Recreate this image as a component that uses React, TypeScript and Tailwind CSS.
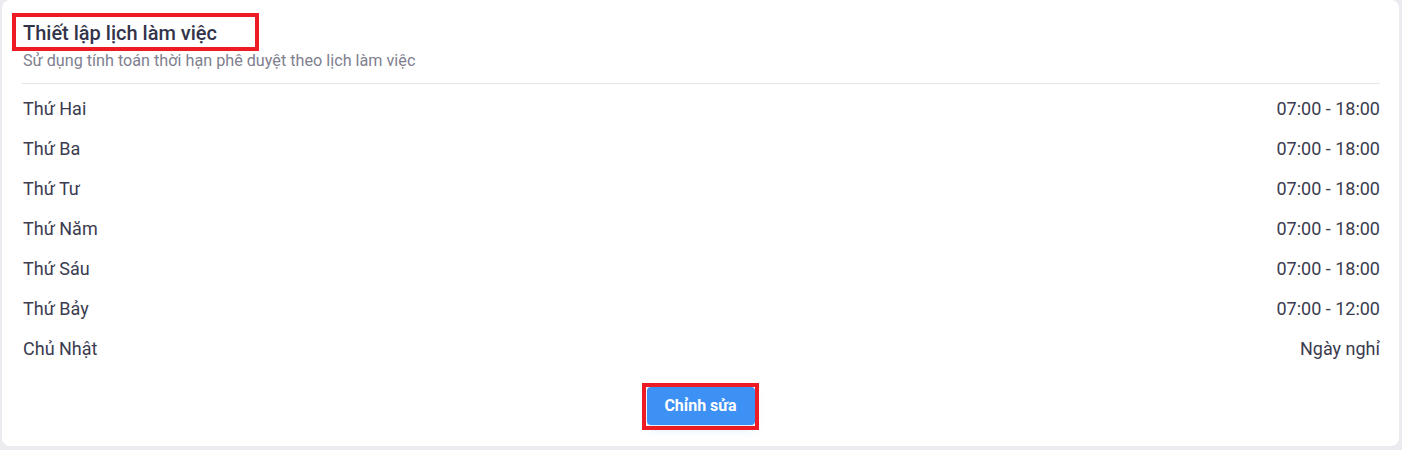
import React from 'react';

interface DaySchedule {
  day: string;
  hours: string;
}

const schedule: DaySchedule[] = [
  { day: 'Thứ Hai', hours: '07:00 - 18:00' },
  { day: 'Thứ Ba', hours: '07:00 - 18:00' },
  { day: 'Thứ Tư', hours: '07:00 - 18:00' },
  { day: 'Thứ Năm', hours: '07:00 - 18:00' },
  { day: 'Thứ Sáu', hours: '07:00 - 18:00' },
  { day: 'Thứ Bảy', hours: '07:00 - 12:00' },
  { day: 'Chủ Nhật', hours: 'Ngày nghỉ' },
];

const App: React.FC = () => {
  return (
    <div className="min-h-[450px] bg-[#ebebf0] pl-[2px] pr-[3px] font-['Roboto','Liberation_Sans',sans-serif]">
      <div className="relative bg-white rounded-lg h-[446px] px-5 pt-5 pb-[21px] flex flex-col">
        {/* Title */}
        <h2 className="text-[20px] leading-[26px] font-medium text-[#33344a] pl-px">Thiết lập lịch làm việc</h2>
        <p className="mt-[5px] text-[16.2px] leading-5 text-[#80808f] pl-px">
          Sử dụng tính toán thời hạn phê duyệt theo lịch làm việc
        </p>
        <div className="mt-[12px] border-t border-[#e6e6ea] mr-[-1px]" />

        {/* Week rows */}
        <div className="mt-1 flex flex-col">
          {schedule.map((d) => (
            <div key={d.day} className="h-10 flex items-center justify-between text-[18px] text-[#3a3b4f] pl-px mr-[-1px]">
              <span>{d.day}</span>
              <span>{d.hours}</span>
            </div>
          ))}
        </div>

        <div className="mt-[19px] flex justify-center">
          <button className="h-[38px] w-[108px] rounded bg-[#3d90f4] text-white text-[16px] font-bold shadow-[0_4px_10px_rgba(61,144,244,0.18)]">
            Chỉnh sửa
          </button>
        </div>

        {/* Annotation boxes */}
        <div className="absolute left-[10px] top-[13px] w-[247px] h-[38px] border-4 border-[#ed1c24] pointer-events-none" />
        <div className="absolute left-[640px] top-[383px] w-[117px] h-[47px] border-4 border-[#ed1c24] pointer-events-none" />
      </div>
    </div>
  );
};

export default App;
